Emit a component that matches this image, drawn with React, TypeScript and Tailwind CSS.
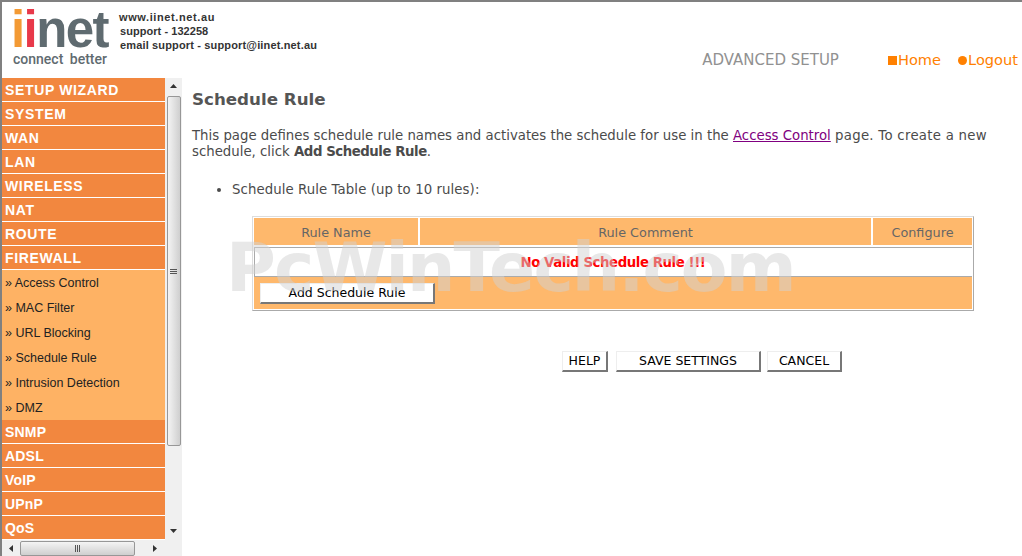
import React from 'react';

const topItems = ['SETUP WIZARD', 'SYSTEM', 'WAN', 'LAN', 'WIRELESS', 'NAT', 'ROUTE', 'FIREWALL'];
const subItems = ['Access Control', 'MAC Filter', 'URL Blocking', 'Schedule Rule', 'Intrusion Detection', 'DMZ'];
const bottomItems = ['SNMP', 'ADSL', 'VoIP', 'UPnP', 'QoS'];

const MenuRow: React.FC<{ label: string; tight?: boolean }> = ({ label, tight }) => (
  <div className={`h-[24px] shrink-0 border-b border-white bg-[#f2873f] pl-[3px] text-[14px] leading-[24px] font-bold text-white ${tight ? 'tracking-[0.2px]' : 'tracking-[0.65px]'}`}>
    {label}
  </div>
);

const Grip: React.FC<{ vertical?: boolean }> = ({ vertical }) => (
  <div className={vertical ? 'flex flex-col gap-[1px]' : 'flex gap-[1px]'}>
    {[0, 1, 2].map(i => (
      <div key={i} className={vertical ? 'h-[1px] w-[7px] bg-[#555]' : 'h-[7px] w-[1px] bg-[#555]'} />
    ))}
  </div>
);

const Arrow: React.FC<{ dir: 'up' | 'down' | 'left' | 'right' }> = ({ dir }) => {
  const points = {
    up: '0,4 7,4 3.5,0',
    down: '0,0 7,0 3.5,4',
    left: '4,0 4,7 0,3.5',
    right: '0,0 0,7 4,3.5',
  }[dir];
  return (
    <svg width="7" height="7" viewBox="0 0 7 7" className="shrink-0">
      <polygon points={points} fill="#333" />
    </svg>
  );
};

const PageButton: React.FC<{ label: string; className: string }> = ({ label, className }) => (
  <button
    type="button"
    className={`h-[21px] border border-t-[#eee] border-l-[#eee] border-r-2 border-b-2 border-r-[#777] border-b-[#777] bg-white text-center text-[12.5px] leading-[18px] text-black ${className}`}
  >
    {label}
  </button>
);

const App: React.FC = () => {
  return (
    <div className='relative flex h-[556px] w-[1022px] flex-col overflow-hidden border-t-2 border-l-2 border-[#808080] bg-white font-["DejaVu_Sans",sans-serif]'>
      <header className="flex h-[76px] shrink-0">
        <div className="ml-[9px] flex w-[108px] flex-col text-[#5f6b70]">
          <div className="mt-[3px] h-[47px] font-['Liberation_Sans',sans-serif] text-[51px] leading-[50px] font-bold tracking-[-1.6px]">
            <span className="text-[#f39a34]">i</span>
            <span className="text-[#e8394a]">i</span>
            <span>net</span>
          </div>
          <div className="ml-[2px] font-['Roboto',sans-serif] text-[14px] leading-[15px] font-medium whitespace-nowrap text-[#5f6b70] [word-spacing:3px]">connect better</div>
        </div>
        <div className="mt-[8px] font-['Liberation_Sans',sans-serif] text-[11px] leading-[14px] font-bold tracking-[0.15px] text-[#333]">
          <div className="tracking-[0.6px]">www.iinet.net.au</div>
          <div className="pl-[1px] tracking-[0.05px]">support - 132258</div>
          <div className="pl-[1px]">email support - support@iinet.net.au</div>
        </div>
        <div className="ml-auto mt-[49px] flex items-baseline text-[14.6px] leading-[17px] text-[#ff8000]">
          <span className="mr-[49px] text-[15px] text-[#919191]">ADVANCED SETUP</span>
          <span className="mr-[1px] h-[9px] w-[9px] bg-[#ff8000]" />
          <span className="mr-[17px]">Home</span>
          <span className="mr-[1px] h-[9px] w-[9px] rounded-full bg-[#ff8000]" />
          <span className="mr-[4px]">Logout</span>
        </div>
      </header>

      <div className="flex min-h-0 flex-1">
        <aside className="flex w-[180px] shrink-0 flex-col font-['Liberation_Sans',sans-serif]">
          <div className="flex h-[462px] shrink-0">
            <nav className="flex w-[163px] flex-col">
              {topItems.map(item => <MenuRow key={item} label={item} />)}
              <div className="flex flex-col bg-[#feb264] pl-[3px] text-[12.5px] text-[#222]">
                {subItems.map(item => <div key={item} className="h-[25px] leading-[27px]">» {item}</div>)}
              </div>
              {bottomItems.map(item => <MenuRow key={item} label={item} tight />)}
            </nav>
            <div className="flex w-[17px] flex-col items-center bg-[#f0f0f0] pt-[6px]">
              <Arrow dir="up" />
              <div className="mt-[5px] flex h-[350px] w-[14px] items-center justify-center rounded-[2px] border border-[#979797] bg-gradient-to-r from-[#f4f4f4] to-[#cfcfcf]">
                <Grip vertical />
              </div>
              <div className="mt-auto mb-[4px]"><Arrow dir="down" /></div>
            </div>
          </div>
          <div className="flex h-[16px] items-center bg-[#f0f0f0]">
            <div className="ml-[7px]"><Arrow dir="left" /></div>
            <div className="ml-[4px] flex h-[15px] w-[115px] items-center justify-center rounded-[2px] border border-[#979797] bg-gradient-to-b from-[#f4f4f4] to-[#cfcfcf]">
              <Grip />
            </div>
            <div className="ml-[18px]"><Arrow dir="right" /></div>
          </div>
        </aside>

        <main className="flex-1 pl-[10px] text-[13.3px] text-[#4b4b4b]">
          <h1 className="mt-[11px] text-[16.7px] leading-[20px] font-bold text-[#555]">Schedule Rule</h1>
          <p className="mt-[19px] w-[810px] leading-[16px]">
            This page defines schedule rule names and activates the schedule for use in the{' '}
            <a className="text-[#800080] underline">Access Control</a>{' '}
            <span className="tracking-[0.27px]">page. To create a new</span> schedule, click <b className="tracking-[-0.45px]">Add Schedule Rule</b>.
          </p>
          <ul className="mt-[22px] list-disc pl-[40px] leading-[16px] tracking-[0.08px]">
            <li>Schedule Rule Table (up to 10 rules):</li>
          </ul>

          <div className="mt-[18px] ml-[60px] w-[722px] border border-[#aaa] border-t-[#ddd] border-l-[#ddd] p-[1px] text-[12.8px] text-[#666]">
            <div className="flex h-[27px] gap-[2px] text-center leading-[29px]">
              <div className="w-[164px] bg-[#feb86c]">Rule Name</div>
              <div className="flex-1 bg-[#feb86c]">Rule Comment</div>
              <div className="w-[99px] bg-[#feb86c]">Configure</div>
            </div>
            <div className="mt-[2px] h-[29px] border-t border-l border-[#aaa] border-r-[#eee] pr-[1px] text-center text-[13.3px] leading-[30px] font-bold tracking-[-0.42px] text-[#f00]">
              No Valid Schedule Rule !!!
            </div>
            <div className="h-[33px] border-t border-[#aaa] bg-[#feb86c] pt-[6px] pl-[6px]">
              <PageButton label="Add Schedule Rule" className="w-[175px]" />
            </div>
          </div>

          <div className="mt-[40px] ml-[370px] flex">
            <PageButton label="HELP" className="mr-[8px] w-[46px]" />
            <PageButton label="SAVE SETTINGS" className="mr-[6px] w-[145px]" />
            <PageButton label="CANCEL" className="w-[75px]" />
          </div>
        </main>
      </div>

      <div className="pointer-events-none absolute top-[228px] left-[224px] text-[68px] leading-[76px] font-bold tracking-[-1.85px] whitespace-nowrap text-[#d2d2d2]/50">
        PcWinTech.com
      </div>
    </div>
  );
};

export default App;
